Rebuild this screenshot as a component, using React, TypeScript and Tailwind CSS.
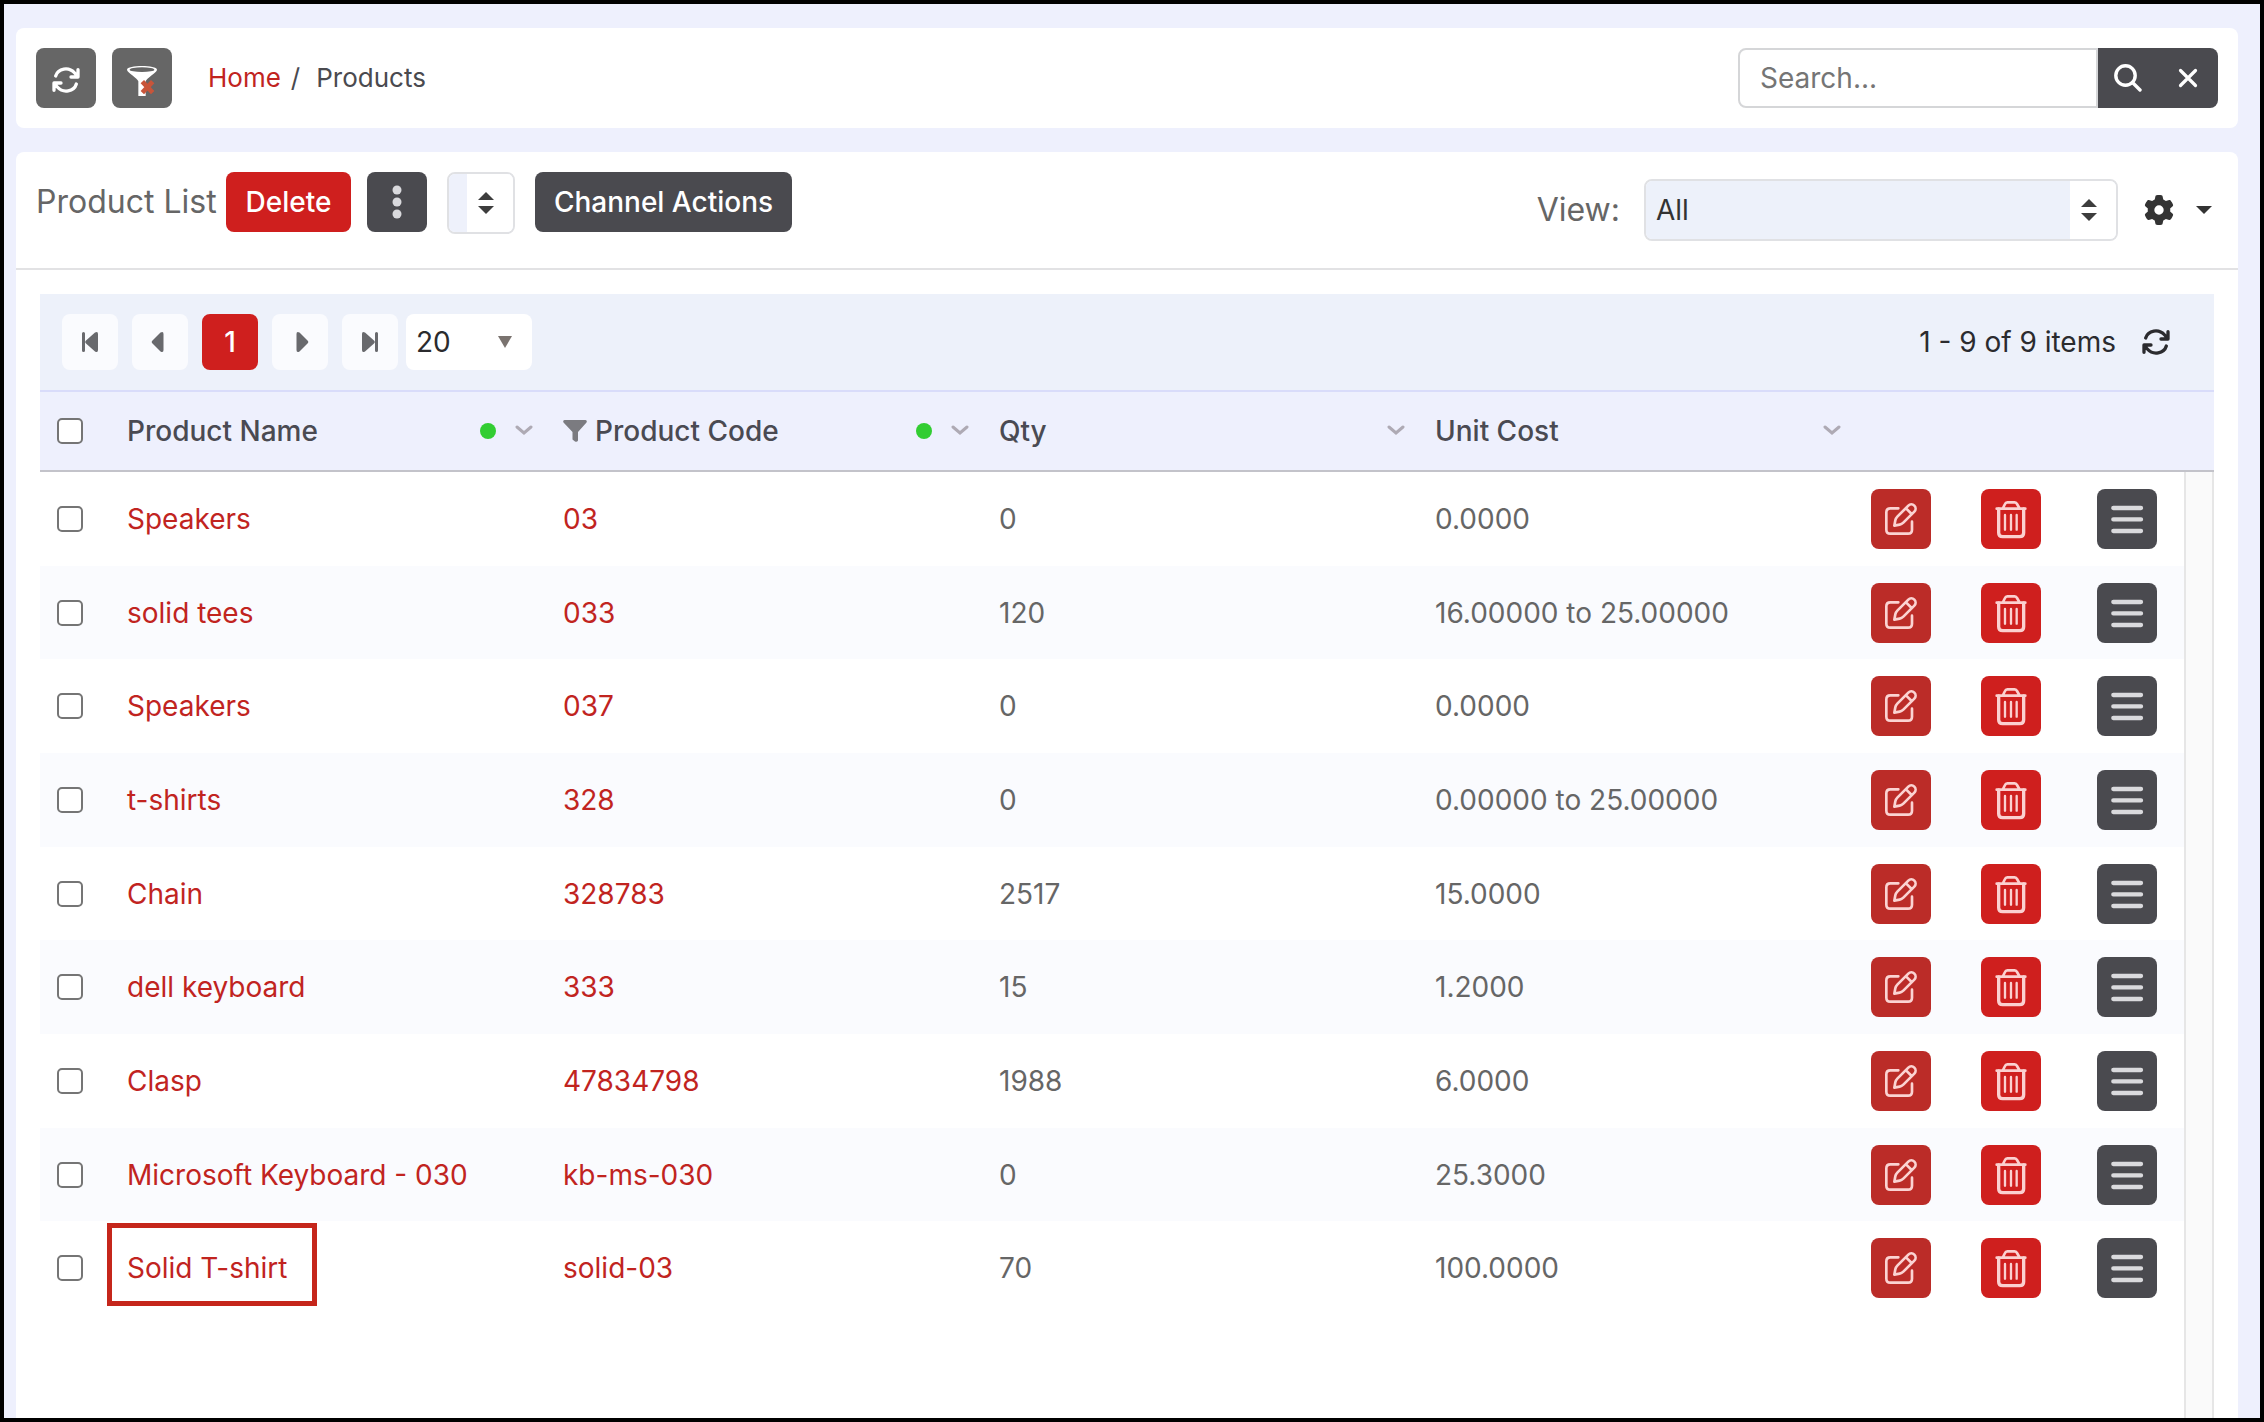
import type { ReactNode } from "react";
import { FaGear } from "react-icons/fa6";

type Product = {
  name: string;
  code: string;
  qty: string;
  cost: string;
  highlighted?: boolean;
};

const products: Product[] = [
  { name: "Speakers", code: "03", qty: "0", cost: "0.0000" },
  { name: "solid tees", code: "033", qty: "120", cost: "16.00000 to 25.00000" },
  { name: "Speakers", code: "037", qty: "0", cost: "0.0000" },
  { name: "t-shirts", code: "328", qty: "0", cost: "0.00000 to 25.00000" },
  { name: "Chain", code: "328783", qty: "2517", cost: "15.0000" },
  { name: "dell keyboard", code: "333", qty: "15", cost: "1.2000" },
  { name: "Clasp", code: "47834798", qty: "1988", cost: "6.0000" },
  { name: "Microsoft Keyboard - 030", code: "kb-ms-030", qty: "0", cost: "25.3000" },
  { name: "Solid T-shirt", code: "solid-03", qty: "70", cost: "100.0000", highlighted: true },
];

const columns = [
  { title: "Product Name", dot: true },
  { title: "Product Code", dot: true, filtered: true },
  { title: "Qty" },
  { title: "Unit Cost" },
];

function RefreshIcon() {
  return (
    <svg viewBox="18 24 84 84" className="size-7" fill="none" stroke="currentColor" strokeWidth="10" strokeLinecap="round" strokeLinejoin="round">
      <path d="M29 54C36 31 68 25 86 45l8 9M96 35v22H75" />
      <path d="M91 78C84 101 52 107 34 87l-8-9M24 97V75h21" />
      <path d="M96 46v11H85zM24 86V75h11z" fill="currentColor" strokeWidth="4" />
    </svg>
  );
}

function EditIcon() {
  return (
    <svg viewBox="0 0 180 180" className="size-full" fill="none" stroke="#fbd3d2" strokeWidth="8" strokeLinecap="round" strokeLinejoin="round">
      <path d="M82 58H58q-12 0-12 12v52q0 12 12 12h53q12 0 12-12V98" />
      <path d="M112 50 79 83q-5 5-6 11l-3 16 16-3q6-1 11-6l33-33a12.5 12.5 0 0 0-18-18zM105 58l17 17" />
    </svg>
  );
}

function TrashIcon() {
  return (
    <svg viewBox="0 0 180 180" className="size-full" fill="none" stroke="#fbd0d0" strokeWidth="8" strokeLinecap="round" strokeLinejoin="round">
      <path d="M47 59h86M66 57l6-12q2-5 7-5h22q5 0 7 5l7 12" />
      <path d="M53 60v71q0 12 12 12h51q12 0 12-12V60" strokeWidth="10" />
      <path d="M72 78v44M90 78v44M107 78v44" strokeWidth="7" />
    </svg>
  );
}

function MenuIcon() {
  return (
    <svg viewBox="0 0 180 180" className="size-full" stroke="#dadadd" strokeWidth="13" strokeLinecap="round">
      <path d="M49 57h83M49 91h83M49 126h83" />
    </svg>
  );
}

function DotsIcon() {
  return (
    <svg viewBox="0 0 60 60" className="size-full" fill="#d9d9dd">
      <circle cx="30" cy="18" r="4.5" />
      <circle cx="30" cy="30" r="4.5" />
      <circle cx="30" cy="42" r="4.5" />
    </svg>
  );
}

function ClearFilterIcon() {
  return (
    <svg viewBox="0 0 180 180" className="size-full">
      <path d="M45 65c0-15 90-15 90 0 0 9-31 24-34 35v44H79v-44C76 89 45 74 45 65z" fill="#fff" />
      <ellipse cx="90" cy="65" rx="37" ry="7" fill="#666" />
      <path d="m91 101 31 33M122 101l-31 33" stroke="#c8553a" strokeWidth="14" />
    </svg>
  );
}

function SortArrows() {
  return (
    <svg viewBox="0 0 16 22" className="h-[22px] w-4" fill="#3d3d3d">
      <path d="M8 0l8 8H0zM8 22l8-8H0z" />
    </svg>
  );
}

function Chevron() {
  return (
    <svg viewBox="0 0 18 12" className="h-3 w-[18px]" fill="none" stroke="#aeaab4" strokeWidth="3" strokeLinecap="round">
      <path d="m2 2 7 6 7-6" />
    </svg>
  );
}

function PagerButton({ label, children }: { label: string; children: ReactNode }) {
  return (
    <button aria-label={label} className="flex size-14 items-center justify-center rounded-lg bg-[#fafbfe]">
      <svg viewBox="0 0 20 20" className="size-5" fill="#68696d">
        {children}
      </svg>
    </button>
  );
}

function Checkbox({ label }: { label: string }) {
  return (
    <input
      type="checkbox"
      aria-label={label}
      className="block size-[26px] appearance-none rounded-[5px] border-2 border-[#757575] bg-white checked:bg-[#cf1f1e]"
    />
  );
}

function TopBar() {
  return (
    <header className="flex items-center rounded-lg bg-white px-5 py-5">
      <button aria-label="Refresh" className="flex size-[60px] items-center justify-center rounded-lg bg-[#666] pt-1 text-white">
        <RefreshIcon />
      </button>
      <button aria-label="Clear filters" className="ml-4 size-[60px] rounded-lg bg-[#666]">
        <ClearFilterIcon />
      </button>
      <nav aria-label="Breadcrumb" className="ml-9 flex text-[26px]">
        <a href="#" className="text-[#c1241f]">Home</a>
        <span className="ml-[10px]">/</span>
        <span className="ml-4">Products</span>
      </nav>
      <form className="ml-auto flex h-[60px]">
        <input
          type="text"
          aria-label="Search"
          placeholder="Search..."
          className="w-[360px] rounded-l-lg border-2 border-[#d5d6d8] px-5 placeholder:text-[#757575]"
        />
        <button type="button" aria-label="Search" className="flex w-[60px] items-center justify-center bg-[#4a4a4f]">
          <svg viewBox="0 0 28 28" className="size-7" fill="none" stroke="#fff" strokeWidth="3.4" strokeLinecap="round">
            <circle cx="11.5" cy="11.5" r="9.7" />
            <path d="m18.500 18.500 7.500 7.500" />
          </svg>
        </button>
        <button type="button" aria-label="Clear search" className="flex w-[60px] items-center justify-center rounded-r-lg bg-[#4a4a4f]">
          <svg viewBox="0 0 20 20" className="size-5" fill="none" stroke="#fff" strokeWidth="3.2" strokeLinecap="round">
            <path d="m2.500 2.500 15 15M17.500 2.500l-15 15" />
          </svg>
        </button>
      </form>
    </header>
  );
}

function Toolbar() {
  return (
    <div className="flex h-[118px] items-start border-b-2 border-[#e2e2e4] px-5 pt-5">
      <h1 className="w-[190px] text-[32px] leading-[60px] whitespace-nowrap text-[#666]">Product List</h1>
      <button className="h-[60px] w-[125px] rounded-lg bg-[#cf1f1e] font-medium text-white">Delete</button>
      <button aria-label="More actions" className="ml-4 size-[60px] rounded-lg bg-[#4a4a4f]">
        <DotsIcon />
      </button>
      <div className="relative ml-5 flex h-[62px] w-[68px] items-center overflow-hidden rounded-lg border-2 border-[#e0e1e4]">
        <select aria-label="Bulk action" className="size-full appearance-none bg-[#eef1fb]">
          <option></option>
        </select>
        <span className="pointer-events-none absolute inset-y-0 right-0 flex w-[46px] items-center justify-center bg-white pr-2">
          <SortArrows />
        </span>
      </div>
      <button className="ml-5 h-[60px] w-[257px] rounded-lg bg-[#4a4a4f] font-medium text-white">Channel Actions</button>

      <div className="mt-[7px] ml-auto flex items-center">
        <label htmlFor="view" className="text-[32px] leading-none text-[#666]">View:</label>
        <div className="relative ml-6 h-[62px] w-[474px] overflow-hidden rounded-lg border-2 border-[#e0e1e4]">
          <select id="view" className="size-full appearance-none bg-[#edf1fa] px-[10px] text-[#333]">
            <option>All</option>
          </select>
          <span className="pointer-events-none absolute inset-y-0 right-0 flex w-[46px] items-center justify-center bg-white pr-2">
            <SortArrows />
          </span>
        </div>
        <button aria-label="View settings" className="ml-[26px] flex items-center gap-[22px] pr-[6px] text-[#333]">
          <FaGear className="size-[30px]" />
          <svg viewBox="0 0 16 8" className="h-2 w-4" fill="currentColor">
            <path d="M0 0h16L8 8z" />
          </svg>
        </button>
      </div>
    </div>
  );
}

function Pager() {
  return (
    <div className="flex h-[98px] items-center border-b-2 border-[#d9dcfa] bg-[#edf1fa] pr-11 pl-[22px] text-[#2b2b2e]">
      <div className="flex gap-[14px]">
        <PagerButton label="First page">
          <path d="M2 1.500a1.500 1.500 0 0 1 3 0v17a1.500 1.500 0 0 1-3 0zM6 8.500 15 .6q3-1.600 3 1.400v16q0 3-3 1.400L6 11.500q-1.600-1.500 0-3z" />
        </PagerButton>
        <PagerButton label="Previous page">
          <path d="m2.500 8.500 8-7.900q3-1.600 3 1.400v16q0 3-3 1.400l-8-7.900q-1.600-1.500 0-3z" />
        </PagerButton>
        <button aria-current="page" className="size-14 rounded-lg bg-[#cf1f1e] font-medium text-white">1</button>
        <PagerButton label="Next page">
          <path d="m17.500 8.500-8-7.900q-3-1.600-3 1.400v16q0 3 3 1.400l8-7.900q1.600-1.500 0-3z" />
        </PagerButton>
        <PagerButton label="Last page">
          <path d="M18 1.500a1.500 1.500 0 0 0-3 0v17a1.500 1.500 0 0 0 3 0zM14 8.500 5 .6Q2-1 2 2v16q0 3 3 1.400l9-7.900q1.600-1.500 0-3z" />
        </PagerButton>
      </div>
      <div className="relative ml-2 h-14 w-[126px]">
        <select aria-label="Items per page" className="size-full appearance-none rounded-lg bg-white px-[10px]">
          <option>20</option>
        </select>
        <svg viewBox="0 0 14 12" className="pointer-events-none absolute top-[22px] right-5 h-3 w-[14px]" fill="#7a736f">
          <path d="M0 0h14L7 12z" />
        </svg>
      </div>
      <span className="ml-auto">1 - 9 of 9 items</span>
      <button aria-label="Reload items" className="ml-[26px]">
        <RefreshIcon />
      </button>
    </div>
  );
}

function ProductTable() {
  return (
    <table className="w-full flex-1 table-fixed border-separate border-spacing-0 self-start text-left">
      <colgroup>
        <col className="w-[67px]" />
        <col />
        <col />
        <col />
        <col />
        <col className="w-[110px]" />
        <col className="w-[116px]" />
        <col className="w-[107px]" />
      </colgroup>
      <thead>
        <tr className="h-20 bg-[#eef0fd]">
          <th className="border-b-2 border-[#c3c3ca] pl-[17px]">
            <Checkbox label="Select all products" />
          </th>
          {columns.map((col) => (
            <th key={col.title} className="border-b-2 border-[#c3c3ca] pr-[10px] pl-5 font-medium text-[#4a4a52]">
              <div className="flex items-center">
                {col.filtered && (
                  <svg viewBox="0 0 24 22" className="mr-2 h-[22px] w-6" fill="#7b7b80">
                    <path d="M1.500 0h21q2 .5 1 2.500L15 12v8.500q-1 2-3 .9l-2.500-2V12L.5 2.500q-1-2 1-2.500z" />
                  </svg>
                )}
                <span>{col.title}</span>
                <span className="ml-auto flex items-center gap-[19px]">
                  {col.dot && <span className="size-4 rounded-full bg-[#32cd32]" />}
                  <Chevron />
                </span>
              </div>
            </th>
          ))}
          <th colSpan={3} className="border-b-2 border-[#c3c3ca]" />
        </tr>
      </thead>
      <tbody className="text-[#666]">
        {products.map((p) => (
          <tr key={p.code} className="h-[94px] even:bg-[#fafbfe] nth-[3n+2]:h-[93px]">
            <td className="pl-[17px]">
              <Checkbox label={`Select ${p.name} ${p.code}`} />
            </td>
            <td className="relative pl-5">
              <a href="#" className="text-[#c1241f]">{p.name}</a>
              {p.highlighted && (
                <span className="pointer-events-none absolute top-0.5 left-0 h-[83px] w-[210px] border-[5px] border-[#c5261b]" />
              )}
            </td>
            <td className="pl-5">
              <a href="#" className="text-[#c1241f]">{p.code}</a>
            </td>
            <td className="pl-5">{p.qty}</td>
            <td className="pl-5">{p.cost}</td>
            <td className="pl-5">
              <button aria-label="Edit" className="block size-[60px] rounded-lg bg-[#bb2c28]">
                <EditIcon />
              </button>
            </td>
            <td className="pl-5">
              <button aria-label="Delete" className="block size-[60px] rounded-lg bg-[#cf1f1e]">
                <TrashIcon />
              </button>
            </td>
            <td className="pl-5">
              <button aria-label="Menu" className="block size-[60px] rounded-lg bg-[#4a4a4f]">
                <MenuIcon />
              </button>
            </td>
          </tr>
        ))}
      </tbody>
    </table>
  );
}

export default function App() {
  return (
    <div className="flex min-h-screen flex-col border-4 border-black bg-[#eef0fd] pt-6 pr-[22px] pl-3 font-['Inter',sans-serif] text-[28px] leading-9 text-[#4a4a4f]">
      <TopBar />
      <main className="mt-6 flex flex-1 flex-col rounded-t-lg bg-white">
        <Toolbar />
        <section className="flex flex-1 flex-col px-6 pt-6">
          <Pager />
          <div className="flex flex-1">
            <ProductTable />
            {/* scroll gutter, the header strip runs on above it */}
            <div className="flex w-[30px] shrink-0 flex-col">
              <div className="h-20 border-b-2 border-[#c3c3ca] bg-[#eef0fd]" />
              <div className="flex-1 border-x-2 border-[#e6e6e6] bg-[#fafafa]" />
            </div>
          </div>
        </section>
      </main>
    </div>
  );
}
